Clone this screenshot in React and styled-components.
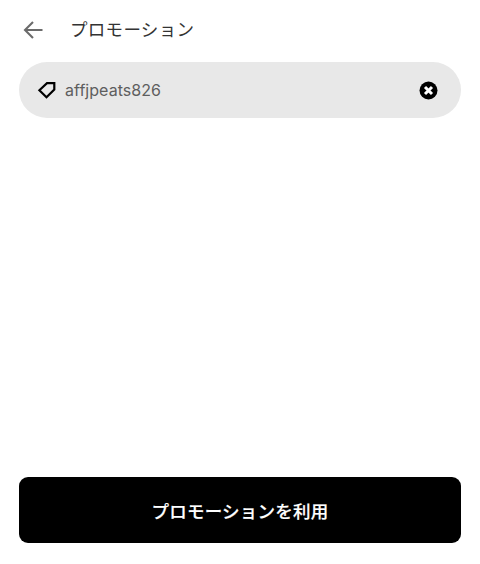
import React from "react"
import styled, { createGlobalStyle } from "styled-components"

const GlobalStyle = createGlobalStyle`
  html, body {
    margin: 0;
    padding: 0;
    background: #fff;
  }
`

const Page = styled.div`
  width: 480px;
  height: 564px;
  box-sizing: border-box;
  padding: 0 19px 21px;
  display: flex;
  flex-direction: column;
  font-family: "Inter", "Noto Sans CJK JP", sans-serif;
`

const Header = styled.div`
  height: 62px;
  box-sizing: border-box;
  padding: 0 0 3px 4px;
  display: flex;
  align-items: center;
  flex-shrink: 0;
`

const BackButton = styled.span`
  width: 20px;
  height: 20px;
  margin-right: 27px;
  display: flex;
  color: #6b6b6b;
`

const Title = styled.span`
  font-size: 17.5px;
  line-height: 20px;
  color: #333;
  letter-spacing: 0.3px;
`

const PromoField = styled.div`
  height: 56px;
  border-radius: 28px;
  background: #e8e8e8;
  display: flex;
  align-items: center;
  padding: 0 23px 0 18px;
`

const TagIcon = styled.svg`
  width: 20px;
  height: 20px;
  margin-right: 8px;
`

const PromoCode = styled.span`
  flex: 1;
  font-size: 16px;
  color: #5e5e5e;
  letter-spacing: 0.05px;
`

const ClearIcon = styled.svg`
  width: 19px;
  height: 19px;
`

const Spacer = styled.div`
  flex: 1;
`

const SubmitButton = styled.button`
  height: 66px;
  border: none;
  border-radius: 9px;
  background: #000;
  color: #fff;
  font-family: inherit;
  font-size: 17.5px;
  font-weight: 500;
  letter-spacing: 0.25px;
  -webkit-text-stroke: 0.2px #fff;
`

export default function App() {
  return (
    <Page>
      <GlobalStyle />
      <Header>
        <BackButton>
          <svg width="20" height="20" viewBox="0 0 20 20" fill="none" stroke="currentColor" strokeWidth="2.1">
            <path d="M19.5 10H2M10 2L2 10L10 18" />
          </svg>
        </BackButton>
        <Title>プロモーション</Title>
      </Header>
      <PromoField>
        <TagIcon viewBox="0 0 20 20" fill="none" stroke="#000" strokeWidth="2.2" strokeLinejoin="miter">
          <path d="M2.4 10.2L10 3.2H17.3V9.5L9.5 17.2Z" />
        </TagIcon>
        <PromoCode>affjpeats826</PromoCode>
        <ClearIcon viewBox="0 0 19 19">
          <circle cx="9.5" cy="9.5" r="9" fill="#000" />
          <path d="M6 6L13 13M13 6L6 13" stroke="#fff" strokeWidth="3" />
        </ClearIcon>
      </PromoField>
      <Spacer />
      <SubmitButton>プロモーションを利用</SubmitButton>
    </Page>
  )
}
